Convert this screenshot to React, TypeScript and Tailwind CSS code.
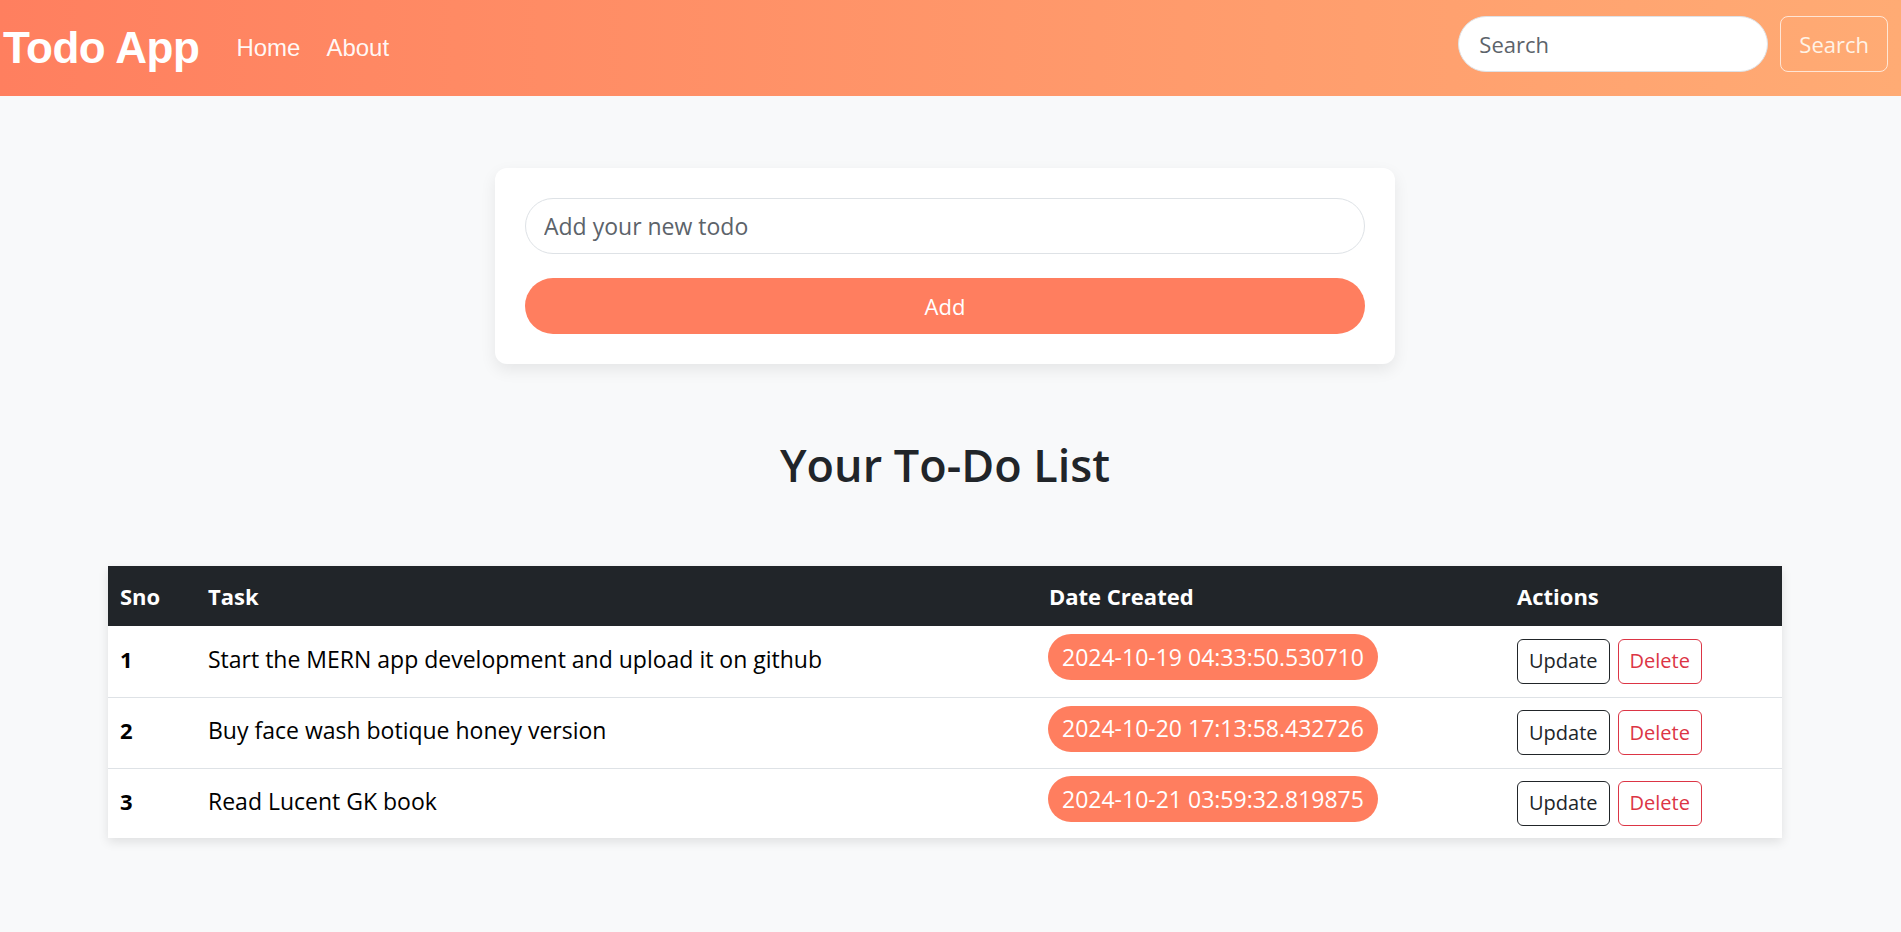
import { useState } from "react";

interface Todo {
  sno: number;
  title: string;
  date: string;
}

const todos: Todo[] = [
  { sno: 1, title: "Start the MERN app development and upload it on github", date: "2024-10-19 04:33:50.530710" },
  { sno: 2, title: "Buy face wash botique honey version", date: "2024-10-20 17:13:58.432726" },
  { sno: 3, title: "Read Lucent GK book", date: "2024-10-21 03:59:32.819875" },
];

const Navbar = () => {
  return (
    <nav className="flex h-[96px] items-center justify-between bg-linear-to-r from-[#ff7f5f] to-[#ffab74] pl-[3px] pr-[13px]">
      <div className="flex items-center">
        <a href="#" className="font-['Liberation_Sans',Arial,sans-serif] text-[44px] font-bold leading-none tracking-[-0.5px] text-white">
          Todo App
        </a>
        <ul className="ml-[37px] flex gap-[26px] font-['Liberation_Sans',Arial,sans-serif] text-[24px] text-white/95">
          <li>
            <a href="#">Home</a>
          </li>
          <li>
            <a href="#">About</a>
          </li>
        </ul>
      </div>
      {/* search sits a little above the bar's middle */}
      <form className="mb-[8px] flex items-center gap-[12px]" onSubmit={(e) => e.preventDefault()}>
        <input
          type="search"
          placeholder="Search"
          className="h-[56px] w-[310px] rounded-full border border-[#dee2e6] bg-white px-[20px] text-[22px] text-[#212529] placeholder:text-[#5c636a] outline-none"
        />
        <button className="h-[56px] rounded-[8px] border border-white/70 px-[18px] text-[22px] text-[#fff3e6]">
          Search
        </button>
      </form>
    </nav>
  );
};

const App = () => {
  const [text, setText] = useState("");

  return (
    <div className="min-h-screen bg-[#f8f9fa] font-['Open_Sans',sans-serif] text-[#212529]">
      <Navbar />
      <main className="w-[1890px] pb-10">
        <div className="mx-auto mt-[72px] w-[900px] rounded-[12px] bg-white p-[30px] shadow-[0_6px_16px_rgba(0,0,0,0.08)]">
          <input
            value={text}
            onChange={(e) => setText(e.target.value)}
            placeholder="Add your new todo"
            className="block h-[56px] w-full rounded-full border border-[#dee2e6] px-[18px] text-[23px] placeholder:text-[#5c636a] outline-none"
          />
          <button className="mt-[24px] h-[56px] w-full rounded-full bg-[#ff7e5f] text-[22px] text-white">
            Add
          </button>
        </div>

        <h2 className="mt-[72px] text-center text-[45px] font-semibold leading-[58px] text-[#212529]">
          Your To-Do List
        </h2>

        <div className="ml-[108px] mt-[72px] w-[1674px] bg-white shadow-[0_4px_10px_rgba(0,0,0,0.1)]">
          <table className="w-full text-left text-[23px]">
            <thead className="bg-[#212529] text-[22px] text-white">
              <tr className="h-[60px]">
                <th className="w-[88px] px-[12px] font-bold">Sno</th>
                <th className="w-[841px] px-[12px] font-bold">Task</th>
                <th className="w-[468px] px-[12px] font-bold">Date Created</th>
                <th className="px-[12px] font-bold">Actions</th>
              </tr>
            </thead>
            <tbody>
              {todos.map((todo, i) => (
                <tr key={todo.sno} className={i < todos.length - 1 ? "h-[71px] border-b border-[#dee2e6]" : "h-[70px]"}>
                  <th className="px-[12px] pb-[4px] text-[22px] font-bold text-black">{todo.sno}</th>
                  <td className="px-[12px] pb-[4px] text-black">{todo.title}</td>
                  <td className="px-[12px] pb-[8px]">
                    <span className="ml-[-1px] inline-flex h-[46px] items-center rounded-full bg-[#ff7e5f] px-[14px] text-white">
                      {todo.date}
                    </span>
                  </td>
                  <td className="px-[12px]">
                    <div className="flex gap-[8px]">
                      <button className="h-[45px] rounded-[6px] border border-[#212529] px-[11px] text-[20px] text-[#212529]">
                        Update
                      </button>
                      <button className="h-[45px] rounded-[6px] border border-[#dc3545] px-[11px] text-[20px] text-[#dc3545]">
                        Delete
                      </button>
                    </div>
                  </td>
                </tr>
              ))}
            </tbody>
          </table>
        </div>
      </main>
    </div>
  );
};

export default App;
